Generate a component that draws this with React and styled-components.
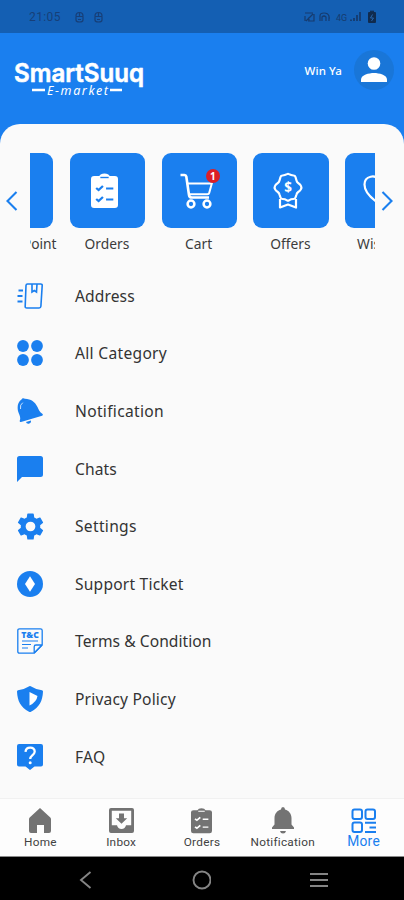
import React from 'react'
import styled, { createGlobalStyle } from 'styled-components'

const blue = '#1a7fef'

const GlobalStyle = createGlobalStyle`
  * {
    box-sizing: border-box;
  }

  body {
    margin: 0;
    background: ${blue};
    font-family: 'Noto Sans', sans-serif;
    overflow: hidden;
  }

  svg {
    display: block;
    flex-shrink: 0;
  }
`

const Logo = () => (
  <svg width="134" height="44" viewBox="0 0 134 44" fill="#fff" overflow="visible">
    <text x="1" y="22" fontFamily="Inter, sans-serif" fontWeight="600" fontSize="25.500" stroke="#fff" strokeWidth=".6" strokeLinejoin="round" textLength="130" lengthAdjust="spacingAndGlyphs">
      SmartSuuq
    </text>
    <text x="34" y="35" fontFamily="Noto Sans, sans-serif" fontStyle="italic" fontSize="12.500" textLength="61">
      E-market
    </text>
    <path d="M19 30h13M97 30h12" stroke="#fff" strokeWidth="2.400" />
  </svg>
)

const AddressIcon = () => (
  <svg width="26" height="26" viewBox="0 0 26 26" fill="none" stroke={blue} strokeWidth="1.600">
    <path d="M10.500 1h13.200q1.600 0 1.500 1.500l-1.300 20.800q-.1 1.700-1.800 1.700H9.800q-1.800 0-1.600-1.700L9 2.500Q9.100 1 10.500 1z" />
    <path d="M15 1v8l2.300-1.500 2.200 1.500.5-8" />
    <path d="M1.500 7.500h4.500M.5 13h5M.5 18.500h5" strokeWidth="2" />
  </svg>
)

const CategoryIcon = () => (
  <svg width="26" height="26" viewBox="0 0 26 26" fill={blue}>
    <circle cx="6" cy="6" r="5.900" />
    <circle cx="20" cy="6" r="5.900" />
    <circle cx="6" cy="20" r="5.900" />
    <circle cx="20" cy="20" r="5.900" />
  </svg>
)

const TiltedBellIcon = () => (
  <svg width="26" height="28" viewBox="0 0 26 28" fill={blue}>
    <path d="M4.500 2.500Q5.500.2 8 1.800C14 2 18 5 20.500 10c1.500 3 2.300 5.500 4.800 6.800.8.400.8 1.600-.2 2L4 25c-1 .3-1.600-.8-1.100-1.700C4 20 2 17.500 1 14 0 9 1 5 4.500 2.500z" />
    <path d="M9 25l5-1.500q.2 2.800-2.200 3.200Q9.500 27 9 25z" />
    <path d="M3.500 12q-.8-4.500 2.300-6.300" fill="none" stroke="#fff" strokeWidth="1" opacity=".75" />
  </svg>
)

const ChatIcon = () => (
  <svg width="26" height="26" viewBox="0 0 26 26" fill={blue}>
    <path d="M2.500 0h21Q26 0 26 2.500v16q0 2.500-2.500 2.500H5l-5 5V2.500Q0 0 2.500 0z" />
  </svg>
)

const GearIcon = () => (
  <svg width="27" height="27" viewBox="2 2 20 20" fill={blue}>
    <path d="M19.140 12.940c.040-.3.060-.61.060-.94 0-.32-.020-.64-.070-.94l2.030-1.580c.180-.14.230-.41.120-.61l-1.920-3.320c-.12-.22-.37-.29-.59-.22l-2.390.96c-.5-.38-1.030-.7-1.620-.94l-.36-2.540c-.040-.24-.24-.41-.48-.41h-3.840c-.24 0-.43.170-.47.410l-.36 2.540c-.59.240-1.130.570-1.620.94l-2.390-.96c-.22-.080-.47 0-.59.220L2.740 8.870c-.12.210-.08.470.12.610l2.030 1.580c-.05.3-.09.630-.09.940s.02.640.070.940l-2.030 1.580c-.18.140-.23.410-.12.610l1.920 3.320c.12.220.37.290.59.220l2.390-.96c.5.380 1.030.7 1.620.94l.36 2.540c.05.240.24.410.48.410h3.840c.24 0 .44-.17.470-.41l.36-2.540c.59-.24 1.130-.56 1.620-.94l2.390.96c.22.080.47 0 .59-.22l1.920-3.320c.12-.22.070-.47-.12-.61l-2.010-1.580zM12 15.600A3.600 3.600 0 1 1 12 8.400a3.600 3.600 0 0 1 0 7.200z" />
  </svg>
)

const TicketIcon = () => (
  <svg width="26" height="26" viewBox="0 0 26 26">
    <circle cx="13" cy="13" r="13" fill={blue} />
    <path d="M13 5.300L18 13l-5 7.700L8 13z" fill="#fff" />
  </svg>
)

const TermsIcon = () => (
  <svg width="26" height="26" viewBox="0 0 26 26" fill="none" stroke={blue} strokeWidth="1.300">
    <path d="M2.500.8h21q1.700 0 1.700 1.700v14.500l-8 8.200H2.500q-1.700 0-1.700-1.700v-21Q.8.800 2.500.800z" />
    <path d="M25 17h-6q-1.800 0-1.800 1.800V25M25 17l-7.800 8" />
    <path d="M5 13h16M5 16.500h9M5 20h6" strokeWidth="1.200" />
    <text x="4.300" y="10" fill={blue} stroke="none" fontFamily="Noto Sans, sans-serif" fontWeight="900" fontSize="8.500" textLength="17.500" lengthAdjust="spacingAndGlyphs">
      T&amp;C
    </text>
  </svg>
)

const ShieldIcon = () => (
  <svg width="26" height="26" viewBox="0 0 26 26">
    <path d="M12.300.3q.7-.5 1.400 0Q18.500 3.500 25 4.200q1 .2 1 1.200C25.500 15 22.500 21 14 25.700q-1 .5-2 0C3.500 21 .5 15 0 5.400q0-1 1-1.200Q7.500 3.500 12.300.300z" fill={blue} />
    <path d="M12.500 6l8 4q-.8 6-8 9.500z" fill="#fff" />
  </svg>
)

const FaqIcon = () => (
  <svg width="26" height="26" viewBox="0 0 26 26">
    <path d="M2 0h22q2 0 2 2v18.500q0 2-2 2h-6.500L13 26l-4.500-3.500H2q-2 0-2-2V2Q0 0 2 0z" fill={blue} />
    <path d="M8.500 7.800C9 2 18 2.500 17.700 7.700c-.2 3.300-4.500 3.500-4.500 7.300" fill="none" stroke="#fff" strokeWidth="2.300" />
    <circle cx="13.200" cy="18.700" r="1.500" fill="#fff" />
  </svg>
)

const ChecklistIcon = ({ width, height, fill, mark }) => (
  <svg width={width} height={height} viewBox="0 0 26 36" preserveAspectRatio="none" fill={fill}>
    <path d="M3 3h5q1-2.600 5-2.600T18 3h5q3 0 3 3v26q0 3-3 3H3q-3 0-3-3V6q0-3 3-3z" />
    <path d="M9 4.500h8" stroke={mark} strokeWidth="1.400" />
    <path d="M5 15l2.300 2L11.500 13M5 26l2.300 2 4.200-4" fill="none" stroke={mark} strokeWidth="2.200" />
    <path d="M14.500 15.500h7M14.500 26.500h7" stroke={mark} strokeWidth="2" />
  </svg>
)

const CartIcon = () => (
  <svg width="36" height="38" viewBox="0 0 36 38" fill="none" stroke="#fff" strokeWidth="2.600">
    <path d="M2.500 3h4q1.500 0 1.800 1.500L11 23q.3 2.500 2.800 2.500H31" />
    <path d="M8.500 11.500h25.300l-2.600 9.600q-.3 1.200-1.800 1.200H11" strokeWidth="2" />
    <circle cx="13" cy="32" r="3.400" strokeWidth="2.500" />
    <circle cx="29" cy="32" r="3.400" strokeWidth="2.500" />
  </svg>
)

const OfferIcon = () => (
  <svg width="32" height="38" viewBox="0 0 32 38" fill="none" stroke="#fff" strokeWidth="2.200" strokeLinejoin="round">
    <path d="M10.500 3.500Q13 3.500 15 2.200q1-.7 2 0 2 1.300 4.500 1.300 1.500 0 2 1.500l1 3.500q.4 1.700 2 2.700 1.700 1 2.500 2.700.8 1.600 0 3.200-.8 1.700-2.500 2.700-1.600 1-2 2.700l-1 3q-.5 1.500-2 1.500-2.500 0-4.500 1.300-1 .7-2 0-2-1.300-4.500-1.300-1.500 0-2-1.500l-1-3q-.4-1.700-2-2.700-1.700-1-2.500-2.700-.8-1.600 0-3.200.8-1.700 2.500-2.700 1.600-1 2-2.700l1-3.500q.5-1.500 2-1.500z" />
    <path d="M8 27v8.500l8-3 8 3V27" />
    <text x="16" y="19.800" fill="#fff" stroke="none" textAnchor="middle" fontFamily="Noto Sans, sans-serif" fontWeight="700" fontSize="13.500">
      $
    </text>
  </svg>
)

const HeartIcon = () => (
  <svg width="34" height="34" viewBox="0 0 34 34" fill="none" stroke="#fff" strokeWidth="2.200">
    <path d="M17 30C9 25 1.500 18 1.500 10.500 1.500 2 12.500-.500 17 7c4.500-7.500 15.500-5 15.500 3.500C32.500 18 25 25 17 30z" />
  </svg>
)

const UserIcon = () => (
  <svg width="26" height="26" viewBox="0 0 26 26" fill="#fff">
    <circle cx="13" cy="6.500" r="6.300" />
    <path d="M0 25v-2.500C0 18 8 16 13 16s13 2 13 6.500V25z" />
  </svg>
)

const ArrowIcon = ({ flip }) => (
  <svg width="12" height="20" viewBox="0 0 12 20" fill="none" stroke={blue} strokeWidth="2.100">
    <path d={flip ? 'M1.500 1l9 9-9 9' : 'M10.500 1l-9 9 9 9'} />
  </svg>
)

const StatusIcons = () => (
  <svg width="74" height="14" viewBox="0 0 74 14" fill="none" stroke="#163b6e" strokeWidth="1.200">
    <path d="M1 3h8M2 11L9 4M1 6v5M4 11h6V4M5 7v4" />
    <path d="M16 11V6q0-3 4-3t5 3v5M18 11V7q2-2 4 0v4M25 8h1" />
    <text x="32" y="11" fill="#163b6e" stroke="none" fontFamily="Roboto, sans-serif" fontSize="9">
      4G
    </text>
    <path d="M47 11V9.500M50 11V8M53 11V5M56 11V2" strokeWidth="1.800" />
    <rect x="64" y="2" width="8" height="11" rx="1" fill="#102b4e" stroke="none" />
    <path d="M66 1.300h4" stroke="#102b4e" />
    <path d="M68.500 4.500l-2 3.500h3l-2 3" stroke="#2766ad" strokeWidth="1" />
  </svg>
)

const BadgeIcon = () => (
  <svg width="9" height="12" viewBox="0 0 9 12" fill="none" stroke="#173f78" strokeWidth="1.200">
    <path d="M1 5q0-3.500 3.500-3.500T8 5M.5 5.500h8M1 6v3q0 2 3.500 2T8 9V6M3 8.500h3M4.500 2v3" />
  </svg>
)

const HomeIcon = () => (
  <svg width="22" height="25" viewBox="0 0 22 25" fill="#737373">
    <path d="M11 0l10.300 9.500q.7.600.7 1.700V23q0 2-2 2h-5v-8H8v8H2q-2 0-2-2V11.200q0-1.100.7-1.700z" />
  </svg>
)

const InboxIcon = () => (
  <svg width="25" height="25" viewBox="0 0 25 25" fill="#737373">
    <path fillRule="evenodd" d="M2 0h21q2 0 2 2v21q0 2-2 2H2q-2 0-2-2V2q0-2 2-2zM2.800 2.800v14.500H8q.8 3.700 4.500 3.700t4.500-3.700h5.200V2.800z" />
    <path d="M10 5.500h5v4.800h3.200l-5.700 5.500-5.700-5.500H10z" />
  </svg>
)

const BellIcon = () => (
  <svg width="22" height="27" viewBox="0 0 22 27" fill="#737373">
    <path d="M9 2.500q0-2.500 2-2.500t2 2.500c4 1 6.500 4.500 6.500 8.500v6.500L22 20.500v1.500H0v-1.500l2.500-3V11c0-4 2.500-7.500 6.500-8.500z" />
    <path d="M8 24h6q-.5 2.500-3 2.500T8 24z" />
  </svg>
)

const MoreIcon = () => (
  <svg width="26" height="26" viewBox="0 0 26 26" fill="none" stroke={blue} strokeWidth="2">
    <rect x="1.500" y="1.500" width="9.500" height="9.500" rx="2" />
    <rect x="14.500" y="1.500" width="9.500" height="9.500" rx="2" />
    <rect x="1.500" y="14.500" width="9.500" height="9.500" rx="2" />
    <path d="M14 14.700h11M18.500 19.400H25M14 24h11" />
  </svg>
)

const tiles = [
  { label: 'Loyalty Point' },
  { label: 'Orders', icon: <ChecklistIcon width={27} height={36} fill="#fff" mark={blue} /> },
  { label: 'Cart', icon: <CartIcon />, count: 1 },
  { label: 'Offers', icon: <OfferIcon /> },
  { label: 'Wishlist', icon: <HeartIcon /> },
]

const menu = [
  { label: 'Address', icon: <AddressIcon />, spacing: 0.1 },
  { label: 'All Category', icon: <CategoryIcon />, spacing: 0.3 },
  { label: 'Notification', icon: <TiltedBellIcon />, spacing: 0.3 },
  { label: 'Chats', icon: <ChatIcon />, spacing: 0.1 },
  { label: 'Settings', icon: <GearIcon />, spacing: 0.3 },
  { label: 'Support Ticket', icon: <TicketIcon />, spacing: 0.2 },
  { label: 'Terms & Condition', icon: <TermsIcon />, spacing: 0.05 },
  { label: 'Privacy Policy', icon: <ShieldIcon />, spacing: 0.17 },
  { label: 'FAQ', icon: <FaqIcon />, spacing: 0.3 },
]

const tabs = [
  { label: 'Home', icon: <HomeIcon /> },
  { label: 'Inbox', icon: <InboxIcon /> },
  { label: 'Orders', icon: <ChecklistIcon width={21} height={26} fill="#737373" mark="#fff" /> },
  { label: 'Notification', icon: <BellIcon /> },
  { label: 'More', icon: <MoreIcon />, active: true },
]

const App = () => (
  <Screen>
    <GlobalStyle />
    <StatusBar>
      <Clock>21:05</Clock>
      <BadgeIcon />
      <BadgeIcon />
      <StatusRight>
        <StatusIcons />
      </StatusRight>
    </StatusBar>

    <Header>
      <Logo />
      <Account>
        <UserName>Win Ya</UserName>
        <Avatar>
          <UserIcon />
        </Avatar>
      </Account>
    </Header>

    <Panel>
      <Carousel>
        <Arrow>
          <ArrowIcon />
        </Arrow>
        <Viewport>
          <Track>
            {tiles.map(({ label, icon, count }) => (
              <Tile key={label}>
                <TileBox>
                  {icon}
                  {count && <Count>{count}</Count>}
                </TileBox>
                <TileLabel>{label}</TileLabel>
              </Tile>
            ))}
          </Track>
        </Viewport>
        <Arrow>
          <ArrowIcon flip />
        </Arrow>
      </Carousel>

      <Menu>
        {menu.map(({ label, icon, spacing }) => (
          <MenuItem key={label}>
            <MenuIcon>{icon}</MenuIcon>
            <MenuLabel $spacing={spacing}>{label}</MenuLabel>
          </MenuItem>
        ))}
      </Menu>
    </Panel>

    <TabBar>
      {tabs.map(({ label, icon, active }) => (
        <Tab key={label}>
          <TabIcon>{icon}</TabIcon>
          <TabLabel $active={active}>{label}</TabLabel>
        </Tab>
      ))}
    </TabBar>

    <SystemBar>
      <svg width="13" height="18" viewBox="0 0 13 18" fill="none" stroke="#858585" strokeWidth="1.900">
        <path d="M11.500 1L2 9l9.500 8" />
      </svg>
      <svg width="20" height="20" viewBox="0 0 20 20" fill="none" stroke="#858585" strokeWidth="1.900">
        <circle cx="11" cy="10" r="8.500" />
      </svg>
      <svg width="18" height="16" viewBox="0 0 18 16" stroke="#858585" strokeWidth="2.200">
        <path d="M0 2h18M0 8h18M0 14h18" />
      </svg>
    </SystemBar>
  </Screen>
)

const Screen = styled.div`
  width: 404px;
  height: 900px;
  display: flex;
  flex-direction: column;
  background: ${blue};
`

const StatusBar = styled.div`
  height: 33px;
  flex-shrink: 0;
  display: flex;
  align-items: center;
  gap: 10px;
  padding: 1px 26px 0 29px;
  background: #145fb3;
`

const Clock = styled.span`
  width: 36px;
  color: #173f78;
  font: 12px Roboto, sans-serif;
  letter-spacing: 0.4px;
`

const StatusRight = styled.div`
  margin-left: auto;
`

const Header = styled.header`
  height: 91px;
  flex-shrink: 0;
  display: flex;
  align-items: flex-start;
  justify-content: space-between;
  padding: 27px 10px 0 13px;
  position: relative;
`

const Account = styled.div`
  display: flex;
  align-items: center;
  gap: 12px;
  margin-top: -10px;
`

const UserName = styled.span`
  color: #fff;
  font-size: 11.5px;
  font-weight: 500;
  letter-spacing: 0.1px;
`

const Avatar = styled.div`
  width: 40px;
  height: 40px;
  display: flex;
  align-items: center;
  justify-content: center;
  border-radius: 50%;
  background: #1976d8;
`

const Panel = styled.main`
  flex: 1;
  min-height: 0;
  padding-top: 29px;
  border-radius: 20px 20px 0 0;
  background: #fafafa;
`

const Carousel = styled.div`
  display: flex;
  height: 114px;
`

const Arrow = styled.div`
  width: 30px;
  height: 95px;
  flex-shrink: 0;
  display: flex;
  align-items: center;
  justify-content: center;
  padding-right: 6px;
`

const Viewport = styled.div`
  width: 345px;
  flex-shrink: 0;
  overflow: hidden;
`

const Track = styled.div`
  display: flex;
  gap: 16.6px;
  margin-left: -52px;
`

const Tile = styled.div`
  width: 75.2px;
  flex-shrink: 0;
  display: flex;
  flex-direction: column;
  align-items: center;
`

const TileBox = styled.div`
  position: relative;
  width: 100%;
  height: 75px;
  display: flex;
  align-items: center;
  justify-content: center;
  padding-right: 6px;
  border-radius: 9px;
  background: ${blue};
`

const Count = styled.span`
  position: absolute;
  top: 16px;
  right: 17px;
  width: 14px;
  height: 14px;
  border-radius: 50%;
  background: #dc1f26;
  color: #fff;
  font-size: 10px;
  font-weight: 700;
  line-height: 14px;
  text-align: center;
`

const TileLabel = styled.span`
  margin-top: 6px;
  padding-right: 1px;
  color: #3c3c3c;
  font-size: 13.8px;
  line-height: 20px;
  white-space: nowrap;
`

const Menu = styled.nav`
  display: flex;
  flex-direction: column;
`

const MenuItem = styled.a`
  height: 57.6px;
  display: flex;
  align-items: center;
  padding-left: 17px;
`

const MenuIcon = styled.div`
  width: 58px;
`

const MenuLabel = styled.span`
  color: #333;
  font-size: 15.6px;
  letter-spacing: ${p => p.$spacing}px;
`

const TabBar = styled.nav`
  height: 59px;
  flex-shrink: 0;
  display: grid;
  grid-template-columns: repeat(5, 1fr);
  border-top: 1px solid #f1f1f1;
  border-bottom: 1px solid #8a8a8a;
  background: #fdfdfd;
`

const Tab = styled.a`
  display: flex;
  flex-direction: column;
  align-items: center;
  padding-top: 7px;
`

const TabIcon = styled.div`
  height: 29px;
  display: flex;
  align-items: center;
`

const TabLabel = styled.span`
  color: ${p => (p.$active ? blue : '#424242')};
  font-family: Roboto, sans-serif;
  font-size: ${p => (p.$active ? '13.8px' : '11.8px')};
  line-height: ${p => (p.$active ? '12px' : '14px')};
  letter-spacing: 0.25px;
`

const SystemBar = styled.div`
  height: 43px;
  flex-shrink: 0;
  display: flex;
  align-items: center;
  justify-content: space-between;
  padding: 2px 76px 0 79px;
  background: #000;
`

export default App
